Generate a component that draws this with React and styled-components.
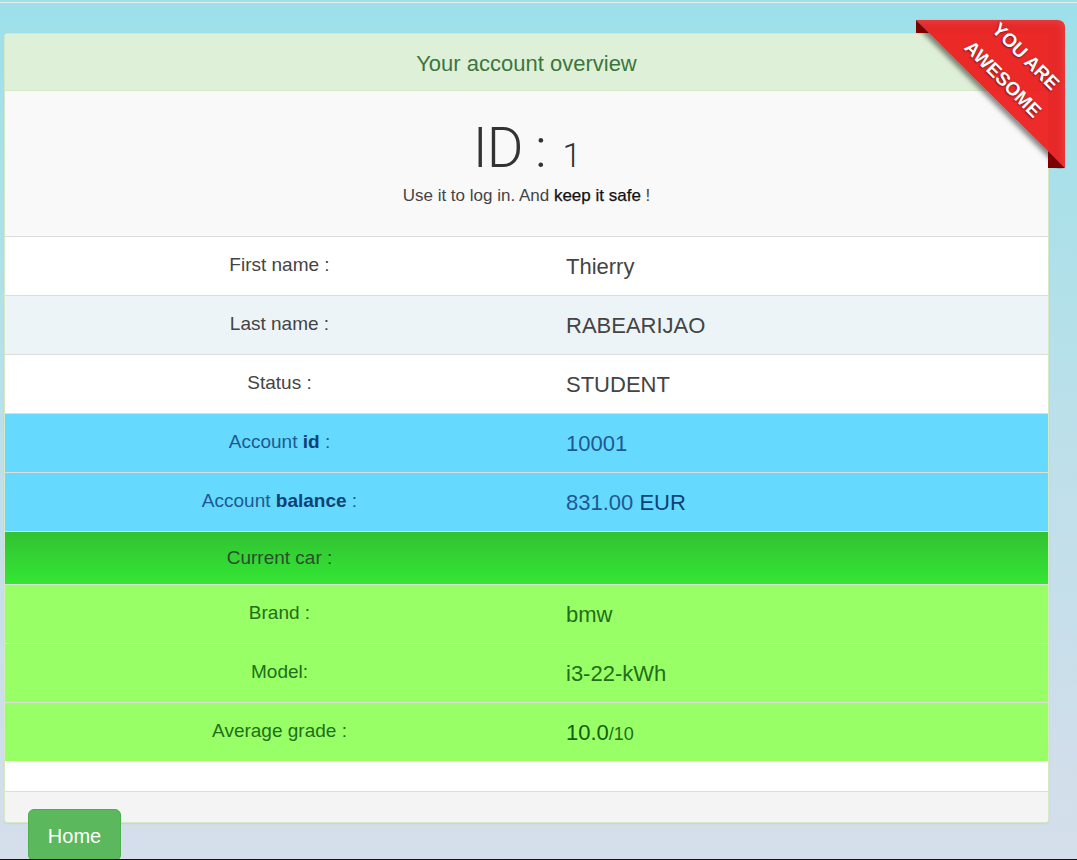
import React from "react";
import styled, { createGlobalStyle, css } from "styled-components";

const GlobalStyle = createGlobalStyle`
  html, body {
    margin: 0;
    padding: 0;
  }
  body {
    min-height: 860px;
    background: linear-gradient(180deg, #9de0e9 0%, #b9e0ea 45%, #d6deeb 100%);
    font-family: "Liberation Sans", Arial, Helvetica, sans-serif;
    color: #333;
    overflow: hidden;
  }
  body::after {
    content: "";
    position: fixed;
    left: 0;
    right: 0;
    bottom: 0;
    height: 1px;
    background: #111;
  }
`;

const TopRule = styled.div`
  margin-top: 2px;
  height: 1px;
  background: #e8ecee;
`;

const Page = styled.main`
  padding: 30px 28px 0 4px;
`;

const Panel = styled.section`
  position: relative;
  background: #fff;
  border: 1px solid #d6e9c6;
  border-radius: 4px;
  box-shadow: 0 1px 2px rgba(0, 0, 0, 0.06);
`;

const PanelHeading = styled.header`
  height: 57px;
  display: flex;
  align-items: center;
  justify-content: center;
  padding-top: 3px;
  box-sizing: border-box;
  background: #dff0d8;
  border-bottom: 1px solid #d6e9c6;
  border-radius: 3px 3px 0 0;
  color: #3c763d;
  font-size: 22px;
`;

const IdBlock = styled.div`
  height: 145px;
  background: #f9f9f9;
  display: flex;
  flex-direction: column;
  align-items: center;
  padding-top: 27px;
  box-sizing: border-box;
`;

const IdTitle = styled.h1`
  margin: 0;
  font-family: Roboto, "Liberation Sans", sans-serif;
  font-weight: 300;
  font-size: 56px;
  line-height: 60px;
  color: #333;
  letter-spacing: -1px;
`;

const IdNumber = styled.span`
  font-size: 34px;
  margin-left: 4px;
`;

const IdHint = styled.p`
  margin: 1px 0 0;
  font-size: 17px;
  color: #444;
  strong {
    font-weight: normal;
    color: #111;
    -webkit-text-stroke: 0.25px #111;
  }
`;

const rowVariants = {
  plain: css`
    background: #fff;
    color: #444;
  `,
  striped: css`
    background: #edf4f7;
    color: #444;
  `,
  info: css`
    background: #66d9ff;
    color: #1c5a92;
    strong {
      color: #0e4275;
    }
  `,
  car: css`
    background: linear-gradient(180deg, #32c232 0%, #34e634 100%);
    color: #2c4d2c;
  `,
  success: css`
    background: #99ff66;
    color: #226e1a;
  `,
};

const Row = styled.div`
  display: grid;
  grid-template-columns: 549px 1fr;
  align-items: center;
  height: ${(p) => (p.$short ? "52px" : "58px")};
  border-top: 1px solid #dddddd;
  ${(p) => rowVariants[p.$variant || "plain"]}
`;

const Label = styled.div`
  text-align: center;
  font-size: 19px;
  padding-bottom: ${(p) => (p.$short ? "0" : "3px")};
  strong {
    font-weight: bold;
  }
`;

const Value = styled.div`
  padding-left: 12px;
  padding-top: 2px;
  font-size: 22px;
  strong {
    font-weight: normal;
  }
`;

const Grade = styled.strong`
  font-weight: bold;
  color: #135d0f;
`;

const GradeMax = styled.span`
  font-size: 18px;
`;

const Spacer = styled.div`
  height: 30px;
  background: #fff;
`;

const PanelFooter = styled.footer`
  height: 30px;
  background: #f4f4f4;
  border-top: 1px solid #dddddd;
  border-radius: 0 0 3px 3px;
`;

const HomeButton = styled.button`
  display: block;
  margin: -14px 0 0 24px;
  width: 93px;
  height: 52px;
  padding: 3px 0 0;
  background: #5cb85c;
  border: 1px solid #4cae4c;
  border-radius: 6px;
  color: #fff;
  font-family: "Liberation Sans", Arial, sans-serif;
  font-size: 20px;
  cursor: pointer;
  position: relative;
`;

const Ribbon = styled.div`
  position: absolute;
  top: -15px;
  right: -18px;
  width: 150px;
  height: 150px;
  pointer-events: none;
`;

const RibbonShape = styled.svg`
  display: block;
  width: 150px;
  height: 150px;
`;

const RibbonText = styled.div`
  position: absolute;
  left: 23px;
  top: 17px;
  width: 150px;
  height: 64px;
  transform: rotate(45deg);
  text-align: center;
  line-height: 32px;
  font-family: "Liberation Sans", Arial, sans-serif;
  font-size: 19px;
  font-weight: bold;
  color: #fff;
  text-shadow: 0 1px 2px rgba(60, 0, 0, 0.7);
`;

const rows = [
  { variant: "plain", label: "First name :", value: "Thierry" },
  { variant: "striped", label: "Last name :", value: "RABEARIJAO" },
  { variant: "plain", label: "Status :", value: "STUDENT" },
  {
    variant: "info",
    label: (
      <>
        Account <strong>id</strong> :
      </>
    ),
    value: "10001",
  },
  {
    variant: "info",
    label: (
      <>
        Account <strong>balance</strong> :
      </>
    ),
    value: (
      <>
        831.00 <strong>EUR</strong>
      </>
    ),
  },
  { variant: "car", label: "Current car :", value: "", short: true },
  { variant: "success", label: "Brand :", value: "bmw" },
  { variant: "success", label: "Model:", value: "i3-22-kWh" },
  {
    variant: "success",
    label: "Average grade :",
    value: (
      <>
        <Grade>10.0</Grade>
        <GradeMax>/10</GradeMax>
      </>
    ),
  },
];

export default function App() {
  return (
    <>
      <GlobalStyle />
      <TopRule />
      <Page>
        <Panel>
          <PanelHeading>Your account overview</PanelHeading>
          <IdBlock>
            <IdTitle>
              ID : <IdNumber>1</IdNumber>
            </IdTitle>
            <IdHint>
              Use it to log in. And <strong>keep it safe</strong> !
            </IdHint>
          </IdBlock>
          {rows.map((r, i) => (
            <Row key={i} $variant={r.variant} $short={r.short}>
              <Label $short={r.short}>{r.label}</Label>
              <Value>{r.value}</Value>
            </Row>
          ))}
          <Spacer />
          <PanelFooter />
          <Ribbon>
            <RibbonShape viewBox="0 0 150 150">
              <defs>
                <filter id="ribShadow" x="-20%" y="-20%" width="140%" height="140%">
                  <feDropShadow dx="-3" dy="3" stdDeviation="2.5" floodColor="#000" floodOpacity="0.55" />
                </filter>
              </defs>
              <path d="M0,1 L141,1 Q149,1 149,9 L149,149 Z" fill="rgba(246,22,22,0.84)" filter="url(#ribShadow)" />
              <path d="M0,1 L0,14 L13,14 Z" fill="#7d0000" />
              <path d="M132,132 L132,149 L149,149 Z" fill="#7d0000" />
            </RibbonShape>
            <RibbonText>
              YOU ARE
              <br />
              AWESOME
            </RibbonText>
          </Ribbon>
        </Panel>
        <HomeButton type="button">Home</HomeButton>
      </Page>
    </>
  );
}
